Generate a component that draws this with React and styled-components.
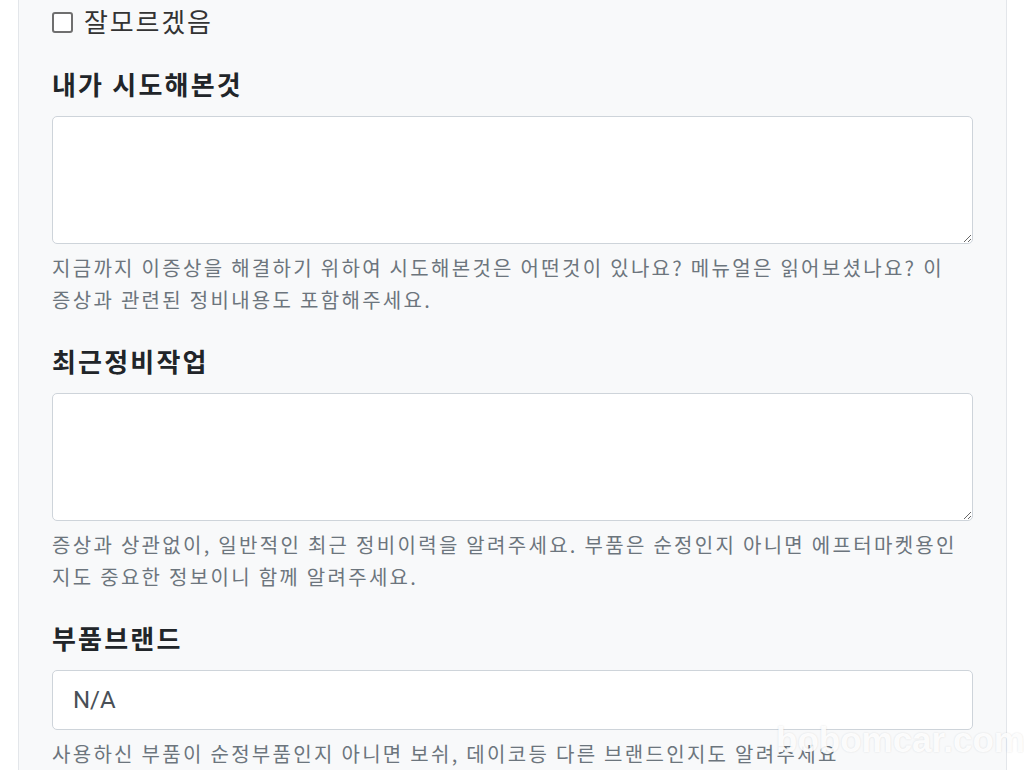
import React from 'react';
import styled, { createGlobalStyle } from 'styled-components';

const GlobalStyle = createGlobalStyle`
  html, body {
    margin: 0;
    padding: 0;
    background: #fff;
  }
  body {
    font-family: "Noto Sans CJK KR", "Noto Sans", sans-serif;
    color: #212529;
  }
`;

// help texts are split where the original wraps
const fields = [
  {
    id: 'tried',
    label: '내가 시도해본것',
    type: 'textarea',
    help: [
      '지금까지 이증상을 해결하기 위하여 시도해본것은 어떤것이 있나요? 메뉴얼은 읽어보셨나요? 이',
      '증상과 관련된 정비내용도 포함해주세요.',
    ],
  },
  {
    id: 'recent',
    label: '최근정비작업',
    type: 'textarea',
    help: [
      '증상과 상관없이, 일반적인 최근 정비이력을 알려주세요. 부품은 순정인지 아니면 에프터마켓용인',
      '지도 중요한 정보이니 함께 알려주세요.',
    ],
  },
  {
    id: 'brand',
    label: '부품브랜드',
    type: 'input',
    value: 'N/A',
    help: ['사용하신 부품이 순정부품인지 아니면 보쉬, 데이코등 다른 브랜드인지도 알려주세요'],
  },
];

const App = () => {
  return (
    <>
      <GlobalStyle />
      <Page>
        <Panel>
          <CheckRow>
            <Check type="checkbox" id="unknown" />
            <CheckLabel htmlFor="unknown">잘모르겠음</CheckLabel>
          </CheckRow>

          {fields.map((f) => (
            <Group key={f.id}>
              <Label htmlFor={f.id}>{f.label}</Label>
              {f.type === 'textarea' ? (
                <TextArea id={f.id} />
              ) : (
                <Input id={f.id} defaultValue={f.value} />
              )}
              <Help>
                {f.help.map((line) => (
                  <HelpLine key={line}>{line}</HelpLine>
                ))}
              </Help>
            </Group>
          ))}
        </Panel>
        <Watermark>bobomcar.com</Watermark>
      </Page>
    </>
  );
};

// Styled components
const Page = styled.div`
  position: relative;
  height: 770px;
  overflow: hidden;
  padding: 0 17px 0 18px;
`;

const Panel = styled.div`
  min-height: 770px;
  box-sizing: border-box;
  padding: 3px 33px 0 33px;
  background: #f8f9fa;
  border: 1px solid #e3e6ea;
  border-top: none;
`;

const CheckRow = styled.div`
  display: flex;
  align-items: center;
  gap: 11px;
  height: 36px;
`;

const Check = styled.input`
  appearance: none;
  margin: 3px 0 0 0;
  width: 21px;
  height: 21px;
  box-sizing: border-box;
  border: 2px solid #6f6f6f;
  border-radius: 3px;
  background: #fff;
`;

const CheckLabel = styled.label`
  font-size: 26px;
  line-height: 36px;
  letter-spacing: 1.8px;
  color: #333;
`;

const Group = styled.div`
  display: flex;
  flex-direction: column;
  margin-top: 27px;
`;

const Label = styled.label`
  font-size: 26px;
  font-weight: 700;
  line-height: 36px;
  letter-spacing: 2.2px;
  margin-bottom: 14px;
  color: #212529;
`;

const TextArea = styled.textarea`
  box-sizing: border-box;
  width: 100%;
  height: 128px;
  margin: 0;
  padding: 8px 16px;
  background: #fff;
  border: 1px solid #ced4da;
  border-radius: 5px;
  font-family: inherit;
  font-size: 20px;
  resize: vertical;
  outline: none;
`;

const Input = styled.input`
  box-sizing: border-box;
  width: 100%;
  height: 60px;
  margin: 0;
  padding: 0 20px;
  background: #fff;
  border: 1px solid #ced4da;
  border-radius: 5px;
  font-family: Roboto, "Noto Sans", sans-serif;
  font-size: 24px;
  color: #495057;
  outline: none;
`;

const Help = styled.div`
  margin-top: 8px;
  font-size: 20px;
  line-height: 32px;
  letter-spacing: 2.3px;
  color: #6c757d;
`;

const HelpLine = styled.div`
  white-space: nowrap;
`;

const Watermark = styled.div`
  position: absolute;
  left: 776px;
  top: 720px;
  font-family: "Liberation Sans", Arial, sans-serif;
  font-weight: 700;
  font-size: 35px;
  color: rgba(255, 255, 255, 0.92);
  text-shadow: 0 0 2px rgba(0, 0, 0, 0.12);
  pointer-events: none;
`;

export default App;
